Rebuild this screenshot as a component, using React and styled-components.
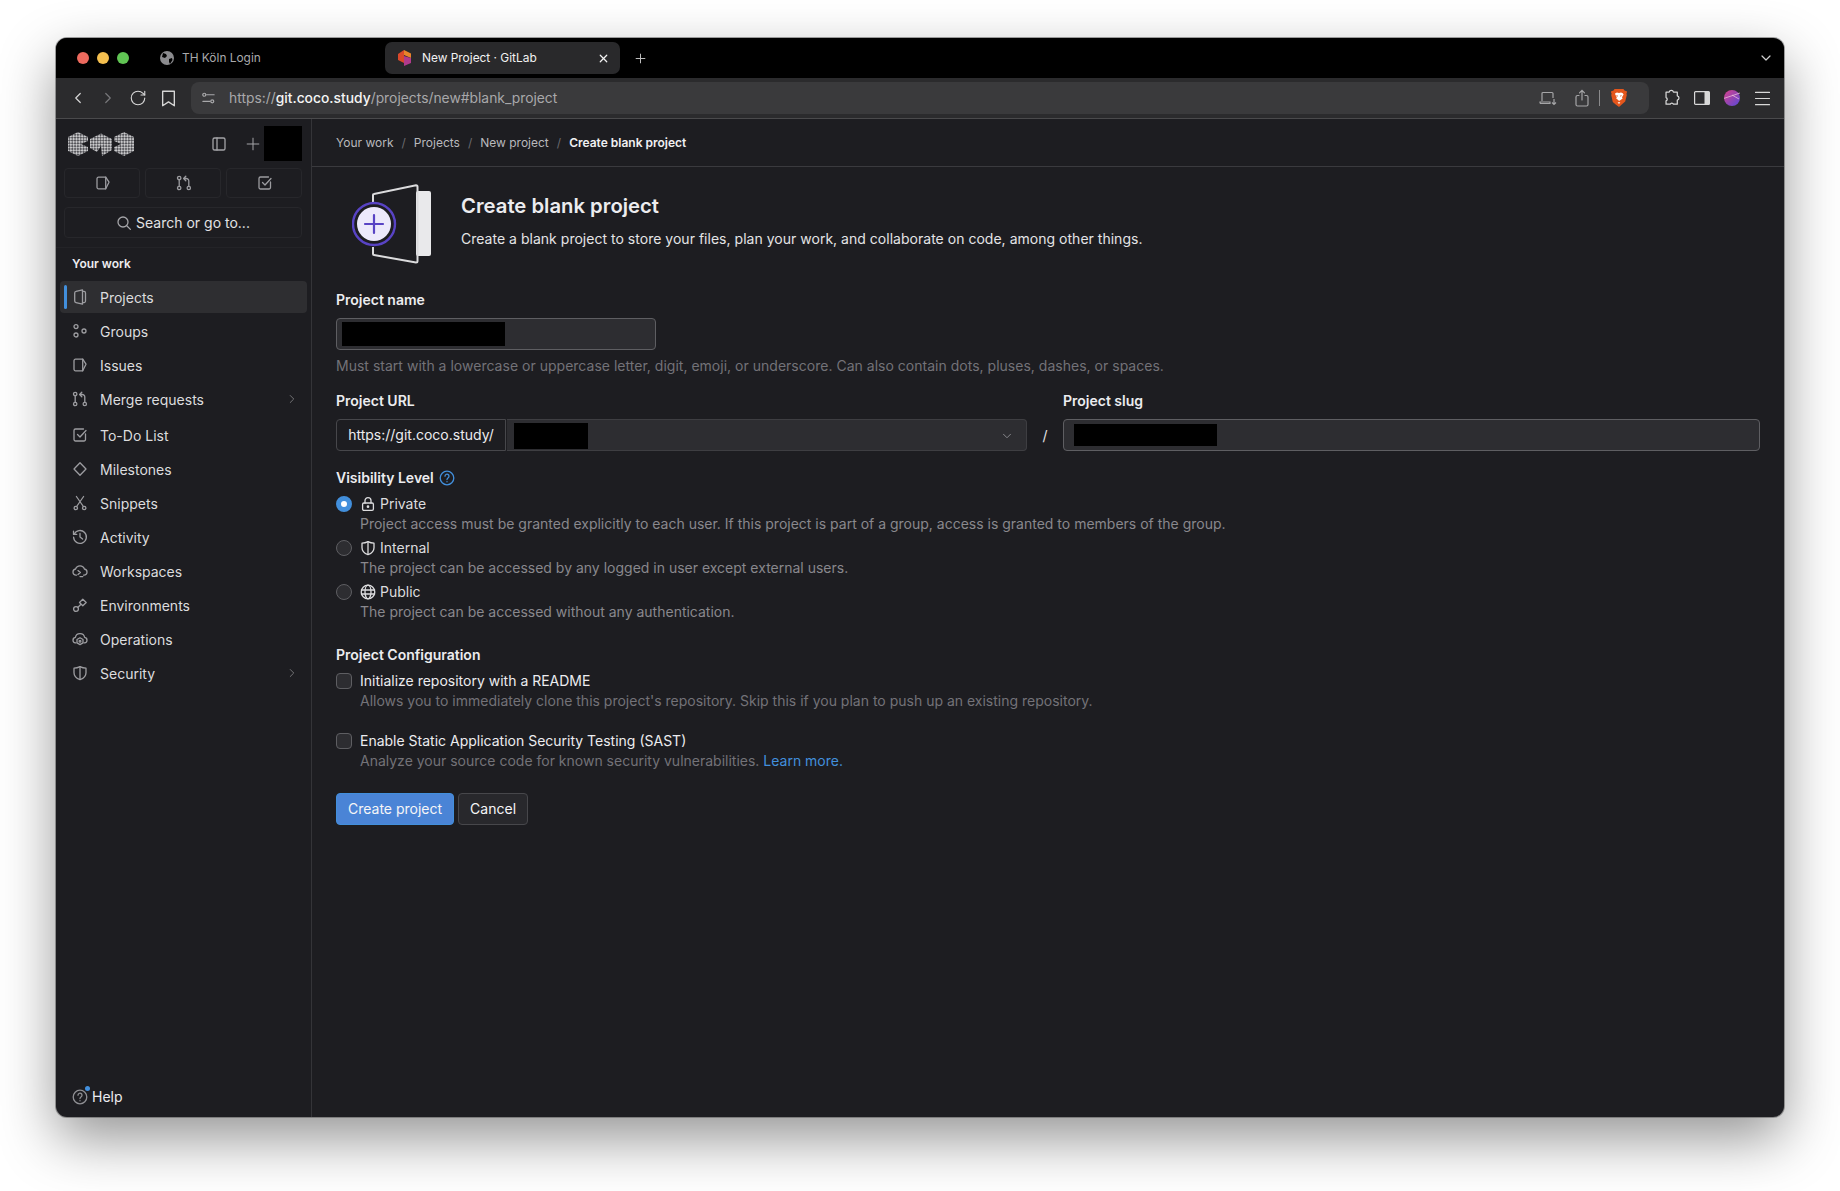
import styled, { createGlobalStyle } from "styled-components";
import { ChevronDown, ChevronLeft, ChevronRight, Menu, Plus, RotateCw, X } from "lucide-react";

const GlobalStyle = createGlobalStyle`
  html, body {
    margin: 0;
    padding: 0;
    background: #ffffff;
  }
  body {
    font-family: "Inter", "Liberation Sans", sans-serif;
    -webkit-font-smoothing: antialiased;
  }
  * { box-sizing: border-box; }
`;

const Desktop = styled.div`
  width: 1840px;
  height: 1191px;
  padding: 38px 56px 74px;
  background: #ffffff;
  overflow: hidden;
`;

const Window = styled.div`
  width: 1728px;
  height: 1079px;
  display: flex;
  flex-direction: column;
  border-radius: 11px;
  overflow: hidden;
  background: #1d1d21;
  box-shadow: 0 0 0 1px rgba(90, 90, 90, 0.55), 0 22px 56px rgba(0, 0, 0, 0.42);
`;

// ========== TABS ==========
const TabBar = styled.div`
  height: 40px;
  flex: none;
  display: flex;
  align-items: center;
  background: #000;
  padding-left: 21px;
  color: #fff;
`;

const Lights = styled.div`
  display: flex;
  gap: 8px;
  width: 80px;
`;

const Light = styled.span`
  width: 12px;
  height: 12px;
  border-radius: 50%;
  background: ${({ $c }) => $c};
`;

const InactiveTab = styled.div`
  width: 228px;
  padding-left: 3px;
  display: flex;
  align-items: center;
  gap: 8px;
  font-size: 11.9px;
  line-height: 14px;
  color: #a9a9ab;

  span { margin-top: -1px; }
`;

const ActiveTab = styled.div`
  width: 235px;
  height: 32px;
  display: flex;
  align-items: center;
  padding: 0 10px 0 13px;
  gap: 10px;
  border-radius: 7px;
  background: #29292b;
  font-size: 11.9px;
  line-height: 14px;
  color: #f2f2f2;
`;

const TabTitle = styled.span`
  flex: 1;
  margin-top: -1px;
`;

const NewTab = styled.div`
  margin-left: 13px;
  display: flex;
  color: #bdbdbd;
`;

const TabsMenu = styled.div`
  margin-left: auto;
  margin-right: 10px;
  display: flex;
  color: #d0d0d0;
`;

// ========== TOOLBAR ==========
const Toolbar = styled.div`
  height: 41px;
  flex: none;
  display: flex;
  align-items: center;
  padding-left: 13px;
  background: #2b2b2d;
  border-bottom: 1px solid #4a4a4c;
`;

const NavIcons = styled.div`
  width: 122px;
  display: flex;
  align-items: center;
  gap: 12px;
`;

const NavIcon = styled.span`
  width: 18px;
  height: 18px;
  display: flex;
  align-items: center;
  justify-content: center;
  color: ${({ $dim }) => ($dim ? "#77777a" : "#d6d6d6")};
`;

const UrlBar = styled.div`
  width: 1458px;
  height: 32px;
  display: flex;
  align-items: center;
  padding-left: 10px;
  border-radius: 8px;
  background: #3a3a3c;
  font-size: 13.85px;
  color: #a8a8aa;
`;

const UrlText = styled.span`
  margin-left: 13px;
  flex: 1;

  b {
    font-weight: 500;
    color: #f5f5f5;
  }
`;

const UrlActions = styled.div`
  display: flex;
  align-items: center;
  padding-right: 22px;
  color: #a5a5a7;
`;

const ActionGap = styled.span`
  width: 18px;
`;

const ActionSep = styled.span`
  width: 1px;
  height: 16px;
  margin: 0 11px 0 10px;
  background: #8a8a8c;
`;

const ToolIcons = styled.div`
  margin-left: 15px;
  display: flex;
  align-items: center;
  gap: 14px;
  color: #d8d8d8;

  svg:first-child { margin: 0 -1px; }
  svg:last-child { margin: 0 -2.5px; }
`;

// ========== BODY ==========
const Body = styled.div`
  flex: 1;
  display: flex;
  min-height: 0;
`;

const Sidebar = styled.aside`
  width: 256px;
  flex: none;
  display: flex;
  flex-direction: column;
  border-right: 1px solid #343438;
`;

const SideTop = styled.div`
  padding: 7px 9px 9px 8px;
  background: #1d1d21;
  border-bottom: 1px solid #232327;
`;

const SideHead = styled.div`
  height: 35px;
  display: flex;
  align-items: center;
  padding-left: 4px;
`;

const HeadIcon = styled.span`
  display: flex;
  color: #a4a4a8;
  margin-left: ${({ $ml }) => $ml}px;
`;

const Redacted = styled.div`
  width: ${({ $w }) => $w}px;
  height: ${({ $h }) => $h}px;
  margin-left: ${({ $ml }) => $ml || 0}px;
  flex: none;
  background: #000;
`;

const QuickRow = styled.div`
  display: grid;
  grid-template-columns: repeat(3, 76px);
  gap: 5px;
  margin-top: 7px;
`;

const QuickButton = styled.div`
  height: 30px;
  display: flex;
  align-items: center;
  justify-content: center;
  padding-left: 2px;
  border: 1px solid #27272b;
  border-radius: 4px;
  color: #9c9ca0;
`;

const SearchBox = styled.div`
  height: 31px;
  margin-top: 9px;
  display: flex;
  align-items: center;
  justify-content: center;
  gap: 4px;
  border: 1px solid #27272b;
  border-radius: 4px;
  font-size: 14px;
  color: #e2e2e4;

  svg { color: #a4a4a8; }
`;

const SectionTitle = styled.div`
  margin: 8px 0 0 16px;
  height: 16px;
  line-height: 16px;
  font-size: 12px;
  font-weight: 600;
  color: #ececef;
`;

const NavList = styled.nav`
  margin: 9px 4px 0 4px;
`;

const NavItem = styled.div`
  position: relative;
  height: ${({ $active }) => ($active ? "32px" : "34px")};
  margin-bottom: ${({ $active, $gap }) => ($active ? "1px" : $gap ? "2px" : "0")};
  display: flex;
  align-items: center;
  padding: 0 8px 0 12px;
  border-radius: 4px;
  background: ${({ $active }) => ($active ? "#2e2e31" : "transparent")};
  font-size: 14px;
  color: #dcdcde;

  &::before {
    content: "";
    display: ${({ $active }) => ($active ? "block" : "none")};
    position: absolute;
    left: 4px;
    top: 4px;
    bottom: 4px;
    width: 3px;
    border-radius: 2px;
    background: #428fdc;
  }
`;

const NavGlyph = styled.span`
  width: 16px;
  height: 16px;
  flex: none;
  margin-right: 12px;
  display: flex;
  color: #9d9da1;
`;

const NavLabel = styled.span`
  flex: 1;
`;

const Caret = styled.span`
  display: flex;
  color: #77777b;
`;

const SideFoot = styled.div`
  margin-top: auto;
  padding: 0 0 12px 16px;
  display: flex;
  align-items: center;
  gap: 4px;
  font-size: 14px;
  color: #ececef;
`;

const HelpGlyph = styled.span`
  position: relative;
  width: 16px;
  height: 16px;
  display: flex;
  color: #8f8f93;

  &::after {
    content: "";
    position: absolute;
    right: -2px;
    top: -3px;
    width: 5px;
    height: 5px;
    border-radius: 50%;
    background: #428fdc;
  }
`;

// ========== MAIN ==========
const Main = styled.main`
  flex: 1;
  min-width: 0;
  display: flex;
  flex-direction: column;
`;

const Crumbs = styled.div`
  height: 48px;
  flex: none;
  display: flex;
  align-items: center;
  padding-left: 24px;
  gap: 8px;
  border-bottom: 1px solid #3a3a3e;
  font-size: 12px;
  color: #b9b9bd;
`;

const CrumbSep = styled.span`
  color: #6a6a6e;
`;

const CrumbNow = styled.span`
  font-weight: 600;
  color: #f0f0f2;
`;

const Content = styled.div`
  padding: 17px 24px 0 24px;
  display: flex;
  flex-direction: column;
  color: #ececef;
`;

const Hero = styled.div`
  display: flex;
  height: 80px;
`;

const HeroArt = styled.div`
  width: 125px;
  flex: none;
  padding-left: 16px;
  display: flex;
`;

const HeroCopy = styled.div`
  padding-top: 8.5px;
`;

const HeroTitle = styled.h1`
  margin: 0 0 10.5px 0;
  font-size: 20.3px;
  line-height: 26px;
  font-weight: 600;
  color: #ececef;
`;

const HeroText = styled.p`
  margin: 0;
  font-size: 14px;
  line-height: 20px;
  letter-spacing: 0.02px;
  color: #e4e4e6;
`;

const FieldLabel = styled.label`
  display: block;
  font-size: 14px;
  line-height: 20px;
  font-weight: 600;
  color: #ececef;
`;

const NameLabel = styled(FieldLabel)`
  margin-top: 26px;
`;

const NameInput = styled.div`
  width: 320px;
  height: 32px;
  margin-top: 8px;
  padding: 3px 5px;
  display: flex;
  border: 1px solid #5e5e62;
  border-radius: 4px;
  background: #2d2d31;
`;

const HelpText = styled.p`
  margin: 6px 0 0 0;
  font-size: 14px;
  line-height: 20px;
  letter-spacing: 0.015px;
  color: #737278;
`;

const UrlRow = styled.div`
  display: flex;
  align-items: flex-end;
  margin-top: 15px;
`;

const UrlField = styled.div`
  width: 691px;
  flex: none;
`;

const SlugSlash = styled.div`
  width: 36px;
  height: 32px;
  flex: none;
  display: flex;
  align-items: center;
  justify-content: center;
  font-size: 14px;
  color: #e4e4e6;
`;

const SlugField = styled.div`
  flex: 1;
`;

const InputGroup = styled.div`
  height: 32px;
  margin-top: 8px;
  display: flex;
`;

const Prefix = styled.div`
  width: 170px;
  flex: none;
  display: flex;
  align-items: center;
  justify-content: center;
  padding-bottom: 1px;
  border: 1px solid #47474b;
  border-radius: 4px 0 0 4px;
  font-size: 14px;
  color: #ececef;
`;

const GroupSelect = styled.div`
  flex: 1;
  margin-left: 1px;
  padding: 3px 0 1px 7px;
  display: flex;
  align-items: stretch;
  border: 1px solid #3e3e42;
  border-left: 0;
  border-radius: 0 4px 4px 0;
  background: #2d2d31;
  color: #8e8e92;
`;

const SelectCaret = styled.span`
  margin-left: auto;
  width: 38px;
  display: flex;
  align-items: center;
  justify-content: center;
`;

const SlugInput = styled.div`
  height: 32px;
  margin-top: 8px;
  padding: 4px 10px;
  display: flex;
  border: 1px solid #5e5e62;
  border-radius: 4px;
  background: #2d2d31;
`;

const VisibilityLabel = styled(FieldLabel)`
  margin-top: 17px;
  display: flex;
  align-items: center;
  gap: 5px;
`;

const InfoIcon = styled.span`
  display: flex;
  color: #428fdc;
`;

const OptionList = styled.div`
  margin-top: 6px;
  display: flex;
  flex-direction: column;
  gap: 4px;
`;

const Option = styled.div`
  display: grid;
  grid-template-columns: 24px 1fr;
  align-items: center;
  line-height: 20px;
`;

const Radio = styled.span`
  width: 16px;
  height: 16px;
  display: block;
  border-radius: 50%;
  border: ${({ $on }) => ($on ? "5px solid #428fdc" : "1px solid #5e5e62")};
  background: ${({ $on }) => ($on ? "#fff" : "#2d2d31")};
`;

const OptionTitle = styled.div`
  display: flex;
  align-items: center;
  gap: 4px;
  font-size: 14px;
  color: #dcdcde;

  svg { color: #dcdcde; }
`;

const OptionHelp = styled.div`
  grid-column: 2;
  font-size: 14px;
  color: #89888d;
`;

const ConfigLabel = styled(FieldLabel)`
  margin-top: 23px;
`;

const CheckRow = styled.div`
  display: grid;
  grid-template-columns: 24px 1fr;
  align-items: center;
  line-height: 20px;
  margin-top: ${({ $mt }) => $mt}px;
`;

const Checkbox = styled.span`
  width: 16px;
  height: 16px;
  display: block;
  border-radius: 4px;
  border: 1px solid #5e5e62;
  background: #2d2d31;
`;

const CheckTitle = styled.div`
  font-size: 14px;
  color: #ececef;
`;

const CheckHelp = styled.div`
  grid-column: 2;
  font-size: 14px;
  color: #737278;

  a {
    color: #428fdc;
    text-decoration: none;
  }
`;

const Buttons = styled.div`
  display: flex;
  gap: 4px;
  margin-top: 22px;
`;

const Button = styled.button`
  height: 32px;
  padding: 0 11px 1px;
  border-radius: 4px;
  border: 1px solid ${({ $primary }) => ($primary ? "#428fdc" : "#47474b")};
  background: ${({ $primary }) => ($primary ? "#4a84d6" : "#28282c")};
  color: #f5f5f7;
  font-family: inherit;
  font-size: 14px;
`;

// ========== ICONS ==========
const G = ({ size = 16, children, sw = 1.3 }) => (
  <svg
    width={size}
    height={size}
    viewBox="0 0 16 16"
    fill="none"
    stroke="currentColor"
    strokeWidth={sw}
    strokeLinecap="round"
    strokeLinejoin="round"
  >
    {children}
  </svg>
);

const ProjectIcon = () => (
  <G>
    <path d="M10.5 2.4H12a1.5 1.5 0 0 1 1.5 1.5v8.2a1.5 1.5 0 0 1-1.5 1.5h-1.5" />
    <path d="M10.5.8v14.4L4 13.6a1.5 1.5 0 0 1-1.3-1.5V3.9A1.5 1.5 0 0 1 4 2.4z" />
  </G>
);

const GroupIcon = () => (
  <G>
    <circle cx="4" cy="3.6" r="2" />
    <circle cx="4" cy="12" r="2" />
    <circle cx="12" cy="8" r="2" />
  </G>
);

const IssueIcon = () => (
  <G>
    <path d="M3.5 2.2h7.2l3.3 5-3.3 6.6H3.5A1.5 1.5 0 0 1 2 12.3V3.7a1.5 1.5 0 0 1 1.5-1.5z" />
    <path d="M10.7 2.2v11.6" />
  </G>
);

const MergeIcon = () => (
  <G>
    <circle cx="3.2" cy="13" r="1.7" />
    <circle cx="12.8" cy="13" r="1.7" />
    <circle cx="3.2" cy="3" r="1.7" />
    <path d="M3.2 4.8v6.4M12.8 11.2V6a2.5 2.5 0 0 0-2.5-2.5H8M9.8 1.2 7.6 3.5l2.2 2.2" />
  </G>
);

const TodoIcon = () => (
  <G>
    <path d="M13.5 7v5.5a1.5 1.5 0 0 1-1.5 1.5H3.5A1.5 1.5 0 0 1 2 12.5v-9A1.5 1.5 0 0 1 3.5 2h8" />
    <path d="m5.5 7.5 2.5 2.5 6-6.5" />
  </G>
);

const MilestoneIcon = () => (
  <G>
    <path d="M8 1.8 14 8l-6 6.2L2 8z" />
  </G>
);

const SnippetIcon = () => (
  <G>
    <circle cx="3.8" cy="13" r="1.7" />
    <circle cx="12.2" cy="13" r="1.7" />
    <path d="M4.6 11.5 11.6 1.5M11.4 11.5 4.4 1.5" />
  </G>
);

const ActivityIcon = () => (
  <G>
    <path d="M2.2 5.2A6.4 6.4 0 1 1 1.6 8.2" />
    <path d="M1.5 2.2v3.2h3.2M8 4.5V8l2.6 2" />
  </G>
);

const WorkspaceIcon = () => (
  <G>
    <path d="M4.4 12.2H4A3 3 0 0 1 1 9a3 3 0 0 1 2.6-3A4.6 4.6 0 0 1 8 2.8 4.6 4.6 0 0 1 12.4 6 3 3 0 0 1 15 9a3 3 0 0 1-3 3.2h-.4" />
    <path d="m6 7.6 2.4 2-2.4 2M8 13.6h2.8" />
  </G>
);

const EnvIcon = () => (
  <G>
    <circle cx="4" cy="12" r="2.4" />
    <path d="M6 10.2 9 7.2M10.8 2.2l3.4 3.3-3.4 3.3-3.3-3.3z" />
  </G>
);

const OpsIcon = () => (
  <G>
    <path d="M4 11.8H3.4A2.6 2.6 0 0 1 1 9.2 2.8 2.8 0 0 1 3.4 6.4 4.6 4.6 0 0 1 8 2.6a4.6 4.6 0 0 1 4.6 3.8A2.8 2.8 0 0 1 15 9.2a2.6 2.6 0 0 1-2.4 2.6H12" />
    <path d="m8 6.8 3 1.7v3.4L8 13.6l-3-1.7V8.5z" />
    <circle cx="8" cy="10.2" r=".9" />
  </G>
);

const ShieldIcon = ({ size }) => (
  <G size={size}>
    <path d="M8 1.6c2 1 4 1.5 6 1.6v4.5c0 3.2-2.4 5.6-6 7-3.6-1.4-6-3.8-6-7V3.2c2-.1 4-.6 6-1.6z" />
    <path d="M8 1.6v12.8" />
  </G>
);

const HelpIcon = ({ size = 16 }) => (
  <G size={size}>
    <circle cx="8" cy="8" r="6.8" />
    <path d="M6 6.2a2 2 0 1 1 3.2 1.6C8.4 8.4 8 8.8 8 9.6" />
    <path d="M8 11.6v.2" />
  </G>
);

const LockIcon = () => (
  <G>
    <rect x="2.6" y="7" width="10.8" height="7.4" rx="1.3" />
    <path d="M5 7V4.6a3 3 0 0 1 6 0V7" />
    <circle cx="8" cy="10.7" r=".7" />
  </G>
);

const GlobeIcon = () => (
  <G>
    <circle cx="8" cy="8" r="6.8" />
    <ellipse cx="8" cy="8" rx="3" ry="6.8" />
    <path d="M1.4 6h13.2M1.4 10h13.2" />
  </G>
);

const SearchIcon = () => (
  <G>
    <circle cx="7" cy="7" r="5" />
    <path d="m11 11 3.4 3.4" />
  </G>
);

const PanelIcon = () => (
  <G>
    <rect x="2" y="2" width="12" height="12" rx="1.6" />
    <path d="M6 2v12" />
  </G>
);

const Favicon = () => (
  <svg width="14" height="16" viewBox="0 0 14 16">
    <path d="M6 0 0 4v6l6 3z" fill="#d9482b" />
    <path d="M6 0l7 3.5V8L6 5z" fill="#e8832a" />
    <path d="M6 6l7 2v5l-7 3z" fill="#b03a8c" />
  </svg>
);

const DimGlobe = () => (
  <svg width="14" height="14" viewBox="0 0 14 14">
    <circle cx="7" cy="7" r="7" fill="#8b8b8e" />
    <path d="M3 2l3 1 1 2-2 2-3-1zM9 8l3-1 .5 2-2.5 4-1-2z" fill="#000" />
  </svg>
);

const SiteControls = () => (
  <G size={15}>
    <circle cx="3.5" cy="4" r="1.6" />
    <circle cx="12" cy="11" r="1.6" />
    <path d="M6 4h8M2 11h7.5" />
  </G>
);

const Bookmark = () => (
  <G size={17}>
    <path d="M2.5 1.2h11v13.6L8 11.2l-5.5 3.6z" />
  </G>
);

const LaptopDown = () => (
  <svg width="18" height="16" viewBox="0 0 18 16" fill="none" stroke="currentColor" strokeWidth="1.2">
    <path d="M3 11V3.5A1 1 0 0 1 4 2.5h9a1 1 0 0 1 1 1V8" />
    <path d="M1 12h10v1.5H2a1 1 0 0 1-1-1zM15 9v5M13 12.5l2 2 2-2" />
  </svg>
);

const ShareBox = () => (
  <svg width="14" height="18" viewBox="0 0 14 18" fill="none" stroke="currentColor" strokeWidth="1.2" strokeLinecap="round">
    <path d="M4 6.5H2.5A1.5 1.5 0 0 0 1 8v7.5A1.5 1.5 0 0 0 2.5 17h9a1.5 1.5 0 0 0 1.5-1.5V8a1.5 1.5 0 0 0-1.5-1.5H10" />
    <path d="M7 11V1.5M4.5 3.8 7 1.3l2.5 2.5" />
  </svg>
);

const BraveLion = () => (
  <svg width="16" height="18" viewBox="0 0 16 18">
    <path d="M3.6 0h8.8l1.4 1.7L15.6 2l.4 1.2-.6 1.5.4 1.4-1.6 6.4-2.6 2.2L8 18l-3.6-2.7-2.6-2.2L.2 6.1.6 4.7 0 3.2.4 2l1.8-.3z" fill="#e4561c" />
    <path d="M4.2 4.2 6 3.4l2 .6 2-.6 1.8.8.8 1.4-1.6 2.6.6 1.2-2 1.6L8 12l-.8-1-2-1.6.6-1.2-1.6-2.6z" fill="#fff" />
    <path d="M6.6 13.2h2.8L8 15z" fill="#fff" />
    <path d="M5.4 6.6 7 7.2M10.6 6.6 9 7.2" stroke="#e4561c" strokeWidth="0.8" />
  </svg>
);

const Puzzle = () => (
  <svg width="18" height="18" viewBox="0 0 16 16" fill="none" stroke="currentColor" strokeWidth="1.1" strokeLinejoin="round">
    <path d="M5.5 2.8C6 .8 8.8.8 9.3 2.8h3.4v3.3c2 .5 2 3.3 0 3.8v3.6H9.3c-.5-1.4-2.4-1.4-2.9 0H2.7v-3c1.4-.5 1.4-2.4 0-2.9V2.8z" />
  </svg>
);

const SidePanel = () => (
  <svg width="16" height="14" viewBox="0 0 16 14" fill="none">
    <rect x=".6" y=".6" width="14.8" height="12.8" rx="1" stroke="currentColor" strokeWidth="1.2" />
    <path d="M10.5.6H15a.4.4 0 0 1 .4.4v12a.4.4 0 0 1-.4.4h-4.5z" fill="currentColor" />
  </svg>
);

const Avatar = () => (
  <svg width="16" height="16" viewBox="0 0 16 16">
    <defs>
      <linearGradient id="avatarFill" x1="0" y1="0" x2="1" y2="1">
        <stop offset="0" stopColor="#d8418a" />
        <stop offset="1" stopColor="#5848d8" />
      </linearGradient>
    </defs>
    <circle cx="8" cy="8" r="8" fill="url(#avatarFill)" />
    <path d="M0 8.4 16 3M8 5l7 4" stroke="#f3c8dc" strokeWidth=".7" fill="none" />
  </svg>
);

const Logo = () => (
  <svg width="66" height="24" viewBox="0 0 66 24">
    <defs>
      <pattern id="logoHatch" width="4" height="4" patternUnits="userSpaceOnUse" patternTransform="rotate(45)">
        <rect width="4" height="4" fill="#55555a" />
        <rect width="2" height="2" fill="#c8c8ca" />
        <rect x="2" y="2" width="2" height="2" fill="#c8c8ca" />
      </pattern>
    </defs>
    <path d="M10 0l10 5v4l-7 3 7 3v4l-10 5L0 19V5z" fill="url(#logoHatch)" />
    <path d="M33 1.5 44 7v11l-10 6-1-10-4 6-7-4V7z" fill="url(#logoHatch)" />
    <path d="M56 0l10 5v14l-10 5-10-5v-4l7-3-7-3V5z" fill="url(#logoHatch)" />
  </svg>
);

const HeroIllustration = () => (
  <svg width="80" height="80" viewBox="0 0 80 80" fill="none">
    <rect x="64" y="7" width="15" height="65" rx="2" fill="#e9e9eb" />
    <path d="M21 18V11a1 1 0 0 1 1-1L64 1.2a1.5 1.5 0 0 1 1.5 1.5V77a1.5 1.5 0 0 1-1.5 1.5L22 71a1 1 0 0 1-1-1v-7" stroke="#dbdbdd" strokeWidth="2" />
    <circle cx="22" cy="40" r="21" stroke="#5843c4" strokeWidth="2.4" fill="#1d1d21" />
    <circle cx="22" cy="40" r="17" fill="#ece9fb" />
    <path d="M22 31v18M13 40h18" stroke="#5843c4" strokeWidth="2.2" strokeLinecap="round" />
  </svg>
);

const NAV = [
  { label: "Projects", icon: <ProjectIcon />, active: true },
  { label: "Groups", icon: <GroupIcon /> },
  { label: "Issues", icon: <IssueIcon /> },
  { label: "Merge requests", icon: <MergeIcon />, caret: true, gap: true },
  { label: "To-Do List", icon: <TodoIcon /> },
  { label: "Milestones", icon: <MilestoneIcon /> },
  { label: "Snippets", icon: <SnippetIcon /> },
  { label: "Activity", icon: <ActivityIcon /> },
  { label: "Workspaces", icon: <WorkspaceIcon /> },
  { label: "Environments", icon: <EnvIcon /> },
  { label: "Operations", icon: <OpsIcon /> },
  { label: "Security", icon: <ShieldIcon />, caret: true },
];

const OPTIONS = [
  {
    label: "Private",
    icon: <LockIcon />,
    on: true,
    help: "Project access must be granted explicitly to each user. If this project is part of a group, access is granted to members of the group.",
  },
  {
    label: "Internal",
    icon: <ShieldIcon />,
    help: "The project can be accessed by any logged in user except external users.",
  },
  {
    label: "Public",
    icon: <GlobeIcon />,
    help: "The project can be accessed without any authentication.",
  },
];

export default function App() {
  return (
    <Desktop>
      <GlobalStyle />
      <Window>
        <TabBar>
          <Lights>
            <Light $c="#ed6a5e" />
            <Light $c="#f4bf4f" />
            <Light $c="#61c554" />
          </Lights>
          <InactiveTab>
            <DimGlobe />
            <span>TH Köln Login</span>
          </InactiveTab>
          <ActiveTab>
            <Favicon />
            <TabTitle>New Project · GitLab</TabTitle>
            <X size={13} strokeWidth={2.2} />
          </ActiveTab>
          <NewTab>
            <Plus size={15} strokeWidth={1.6} />
          </NewTab>
          <TabsMenu>
            <ChevronDown size={16} strokeWidth={1.8} />
          </TabsMenu>
        </TabBar>

        <Toolbar>
          <NavIcons>
            <NavIcon><ChevronLeft size={20} strokeWidth={1.6} /></NavIcon>
            <NavIcon $dim><ChevronRight size={20} strokeWidth={1.6} /></NavIcon>
            <NavIcon><RotateCw size={18} strokeWidth={1.5} /></NavIcon>
            <NavIcon><Bookmark /></NavIcon>
          </NavIcons>
          <UrlBar>
            <SiteControls />
            <UrlText>
              https://<b>git.coco.study</b>/projects/new#blank_project
            </UrlText>
            <UrlActions>
              <LaptopDown />
              <ActionGap />
              <ShareBox />
              <ActionSep />
              <BraveLion />
            </UrlActions>
          </UrlBar>
          <ToolIcons>
            <Puzzle />
            <SidePanel />
            <Avatar />
            <Menu size={21} strokeWidth={1.3} />
          </ToolIcons>
        </Toolbar>

        <Body>
          <Sidebar>
            <SideTop>
              <SideHead>
                <Logo />
                <HeadIcon $ml={77}><PanelIcon /></HeadIcon>
                <HeadIcon $ml={16}><Plus size={20} strokeWidth={1.2} /></HeadIcon>
                <Redacted $w={38} $h={35} $ml={1} />
              </SideHead>
              <QuickRow>
                <QuickButton><IssueIcon /></QuickButton>
                <QuickButton><MergeIcon /></QuickButton>
                <QuickButton><TodoIcon /></QuickButton>
              </QuickRow>
              <SearchBox>
                <SearchIcon />
                Search or go to...
              </SearchBox>
            </SideTop>
            <SectionTitle>Your work</SectionTitle>
            <NavList>
              {NAV.map((item) => (
                <NavItem key={item.label} $active={item.active} $gap={item.gap}>
                  <NavGlyph>{item.icon}</NavGlyph>
                  <NavLabel>{item.label}</NavLabel>
                  {item.caret && (
                    <Caret><ChevronRight size={14} strokeWidth={1.6} /></Caret>
                  )}
                </NavItem>
              ))}
            </NavList>
            <SideFoot>
              <HelpGlyph><HelpIcon /></HelpGlyph>
              Help
            </SideFoot>
          </Sidebar>

          <Main>
            <Crumbs>
              <span>Your work</span>
              <CrumbSep>/</CrumbSep>
              <span>Projects</span>
              <CrumbSep>/</CrumbSep>
              <span>New project</span>
              <CrumbSep>/</CrumbSep>
              <CrumbNow>Create blank project</CrumbNow>
            </Crumbs>

            <Content>
              <Hero>
                <HeroArt><HeroIllustration /></HeroArt>
                <HeroCopy>
                  <HeroTitle>Create blank project</HeroTitle>
                  <HeroText>
                    Create a blank project to store your files, plan your work, and collaborate on code, among other things.
                  </HeroText>
                </HeroCopy>
              </Hero>

              <NameLabel>Project name</NameLabel>
              <NameInput>
                <Redacted $w={163} $h={24} />
              </NameInput>
              <HelpText>
                Must start with a lowercase or uppercase letter, digit, emoji, or underscore. Can also contain dots, pluses, dashes, or spaces.
              </HelpText>

              <UrlRow>
                <UrlField>
                  <FieldLabel>Project URL</FieldLabel>
                  <InputGroup>
                    <Prefix>https://git.coco.study/</Prefix>
                    <GroupSelect>
                      <Redacted $w={74} $h={26} />
                      <SelectCaret><ChevronDown size={14} strokeWidth={1.6} /></SelectCaret>
                    </GroupSelect>
                  </InputGroup>
                </UrlField>
                <SlugSlash>/</SlugSlash>
                <SlugField>
                  <FieldLabel>Project slug</FieldLabel>
                  <SlugInput>
                    <Redacted $w={143} $h={22} />
                  </SlugInput>
                </SlugField>
              </UrlRow>

              <VisibilityLabel>
                Visibility Level
                <InfoIcon><HelpIcon /></InfoIcon>
              </VisibilityLabel>
              <OptionList>
                {OPTIONS.map((opt) => (
                  <Option key={opt.label}>
                    <Radio $on={opt.on} />
                    <OptionTitle>
                      {opt.icon}
                      {opt.label}
                    </OptionTitle>
                    <OptionHelp>{opt.help}</OptionHelp>
                  </Option>
                ))}
              </OptionList>

              <ConfigLabel>Project Configuration</ConfigLabel>
              <CheckRow $mt={6}>
                <Checkbox />
                <CheckTitle>Initialize repository with a README</CheckTitle>
                <CheckHelp>
                  Allows you to immediately clone this project's repository. Skip this if you plan to push up an existing repository.
                </CheckHelp>
              </CheckRow>
              <CheckRow $mt={20}>
                <Checkbox />
                <CheckTitle>Enable Static Application Security Testing (SAST)</CheckTitle>
                <CheckHelp>
                  Analyze your source code for known security vulnerabilities. <a href="#learn">Learn more.</a>
                </CheckHelp>
              </CheckRow>

              <Buttons>
                <Button $primary>Create project</Button>
                <Button>Cancel</Button>
              </Buttons>
            </Content>
          </Main>
        </Body>
      </Window>
    </Desktop>
  );
}
